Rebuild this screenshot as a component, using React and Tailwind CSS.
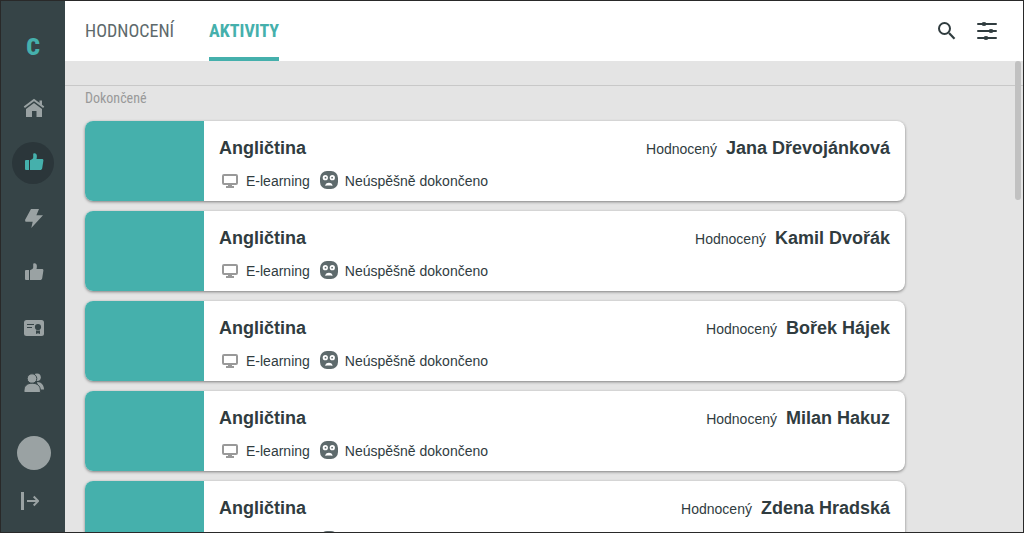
const people = ['Jana Dřevojánková', 'Kamil Dvořák', 'Bořek Hájek', 'Milan Hakuz', 'Zdena Hradská'];

const narrow = "font-['Roboto_Condensed','Liberation_Sans_Narrow',sans-serif]";

function HomeIcon() {
    return (
        <svg width="24" height="24" viewBox="0 0 24 24" fill="currentColor" aria-hidden="true">
            <path d="M3.3 11.3 13 4l9.7 7.3" fill="none" stroke="currentColor" strokeWidth="2" />
            <path d="M18.5 4.500H21v5l-2.500-2z" />
            <path d="m13 7 8 6v8h-5.500v-6h-4.500v6H5v-8z" />
        </svg>
    );
}

function ThumbIcon() {
    return (
        <svg width="24" height="24" viewBox="0 0 24 24" fill="currentColor" aria-hidden="true">
            <path d="M4 10a1 1 0 0 1 1-1h3v10H5a1 1 0 0 1-1-1z" />
            <path d="M9 9.3 11.4 8c.5-.3.8-.8.8-1.400V3c0-1.100 2.400-1.200 3.200.2.7 1.200.6 3 .1 4.800h5.500c.9 0 1.500.6 1.400 1.400l-1.200 7.800c-.2 1.100-1 1.800-2.100 1.800H9z" />
        </svg>
    );
}

function BoltIcon() {
    return (
        <svg width="24" height="24" viewBox="0 0 24 24" fill="currentColor" aria-hidden="true">
            <path d="M10 3h8l-2.600 6.300H22L10.300 22l1.400-6.300H4.500L4 14z" />
        </svg>
    );
}

function CertificateIcon() {
    return (
        <svg width="24" height="24" viewBox="0 0 24 24" aria-hidden="true">
            <rect x="3" y="4" width="20" height="16" rx="2.5" fill="currentColor" />
            <path d="M6 8.5h7M6 11.5h5" stroke="#364447" strokeWidth="1.2" />
            <circle cx="17" cy="11" r="3.1" fill="#364447" />
            <path d="M15 14.6h4V18l-2-.8-2 .8z" fill="#364447" />
        </svg>
    );
}

function UsersIcon() {
    return (
        <svg width="24" height="24" viewBox="0 0 24 24" fill="currentColor" aria-hidden="true">
            <circle cx="16" cy="6.2" r="3.8" />
            <path d="M16 11c4.500 0 7 3.500 7 7.500h-5z" />
            <circle cx="11" cy="7.6" r="4.8" stroke="#364447" strokeWidth="1" />
            <path d="M3 21.500v-2c0-4.500 3-7.300 8.200-7.300s8.200 2.800 8.200 7.300v2z" stroke="#364447" strokeWidth="1" />
        </svg>
    );
}

function LogoutIcon() {
    return (
        <svg width="18" height="18" viewBox="0 0 18 18" fill="none" stroke="currentColor" aria-hidden="true">
            <path d="M1.5 0v18" strokeWidth="3" />
            <path d="M6 9h11.500M12.700 4.500 17.200 9l-4.500 4.500" strokeWidth="2" />
        </svg>
    );
}

function SearchIcon() {
    return (
        <svg width="20" height="20" viewBox="0 0 20 20" fill="none" stroke="currentColor" aria-hidden="true">
            <circle cx="7.5" cy="7.5" r="5.5" strokeWidth="2" />
            <path d="m12 12 5.500 5.700" strokeWidth="2.2" />
        </svg>
    );
}

function FilterIcon() {
    return (
        <svg width="20" height="20" viewBox="0 0 20 20" aria-hidden="true">
            <path d="M1 3h18M1 10h18M1 17h18" stroke="currentColor" strokeWidth="2" strokeLinecap="round" />
            <ellipse cx="7" cy="3" rx="2.5" ry="2" fill="currentColor" />
            <ellipse cx="14" cy="10" rx="2.5" ry="2" fill="currentColor" />
            <ellipse cx="9" cy="17" rx="2.5" ry="2" fill="currentColor" />
        </svg>
    );
}

function MonitorIcon() {
    return (
        <svg width="16" height="14" viewBox="0 0 16 14" aria-hidden="true">
            <rect x="1" y="1" width="14" height="9" rx="1" fill="none" stroke="#999" strokeWidth="2" />
            <path d="M6 11h4v1h2v2H4v-2h2z" fill="#999" />
        </svg>
    );
}

function SadFaceIcon() {
    return (
        <svg width="18" height="18" viewBox="0 0 18 18" aria-hidden="true">
            <rect width="18" height="18" rx="7" fill="#5e6a6c" />
            <circle cx="5.3" cy="6.7" r="2.6" fill="#fff" />
            <circle cx="12.3" cy="6.7" r="2.6" fill="#fff" />
            <circle cx="5.5" cy="6.7" r="0.9" fill="#5e6a6c" />
            <circle cx="12.1" cy="6.7" r="0.9" fill="#5e6a6c" />
            <path d="M5.300 15c0-2.200 1.500-3.200 3.600-3.200s3.600 1 3.600 3.200l-1.500-.6H6.800z" fill="#fff" />
        </svg>
    );
}

const navItems = [
    { label: 'Domů', icon: HomeIcon },
    { label: 'Hodnocení', icon: ThumbIcon, active: true },
    { label: 'Aktivity', icon: BoltIcon },
    { label: 'Zpětná vazba', icon: ThumbIcon },
    { label: 'Certifikáty', icon: CertificateIcon },
    { label: 'Lidé', icon: UsersIcon },
];

function Sidebar() {
    return (
        <aside className="w-16 shrink-0 bg-[#364447] text-[#9aa2a3] flex flex-col items-center pt-6">
            <a href="#" className={`h-[42px] flex items-center pt-[2px] text-2xl font-black text-[#45b0ac] ${narrow}`}>C</a>
            <nav className="mt-5 flex flex-col gap-[13px]">
                {navItems.map(({ label, icon: Icon, active }) => (
                    <a
                        key={label}
                        href="#"
                        aria-label={label}
                        className={`w-[42px] h-[42px] rounded-full flex items-center justify-center ${active ? 'bg-[#2b363a] text-[#45b0ac]' : ''}`}
                    >
                        <Icon />
                    </a>
                ))}
            </nav>
            <div className="mt-8 w-[34px] flex flex-col items-start gap-[22px] ml-[2px]">
                <button aria-label="Profil" className="w-[34px] h-[34px] rounded-full bg-[#9aa2a3]" />
                <button aria-label="Odhlásit" className="ml-1"><LogoutIcon /></button>
            </div>
        </aside>
    );
}

function ActivityCard({ name }) {
    return (
        <article className="h-20 shrink-0 flex rounded-lg overflow-hidden bg-white shadow-[0_1px_3px_rgba(0,0,0,0.45)]">
            <div className="w-[119px] shrink-0 bg-[#45b0ac]" />
            <div className="flex-1 px-[15px] pt-[15px]">
                <div className="flex items-baseline justify-between leading-6">
                    <h2 className="text-lg leading-6 font-bold">Angličtina</h2>
                    <p className="text-sm leading-6">
                        Hodnocený
                        <strong className="ml-[9px] text-lg leading-6">{name}</strong>
                    </p>
                </div>
                <div className="mt-[10px] pl-[3px] flex items-center text-sm">
                    <MonitorIcon />
                    <span className="ml-2">E-learning</span>
                    <span className="ml-[10px] pb-[2px]"><SadFaceIcon /></span>
                    <span className="ml-[7px]">Neúspěšně dokončeno</span>
                </div>
            </div>
        </article>
    );
}

export default function App() {
    return (
        <div className="h-screen flex overflow-hidden border border-[#292929] font-['Liberation_Sans',Arial,sans-serif] text-[#303c3f]">
            <Sidebar />
            <div className="flex-1 min-w-0 flex flex-col">
                <header className="h-[60px] shrink-0 bg-white flex justify-between pl-5 pr-[26px]">
                    <nav className={`flex gap-[35px] text-lg ${narrow}`}>
                        <a href="#" className="flex items-center border-b-4 border-transparent pt-1 text-[#5e6a6c]">HODNOCENÍ</a>
                        <a href="#" className="flex items-center border-b-4 border-[#45b0ac] pt-1 font-bold text-[#45b0ac]">AKTIVITY</a>
                    </nav>
                    <div className="flex items-center gap-5">
                        <button aria-label="Hledat"><SearchIcon /></button>
                        <button aria-label="Filtr"><FilterIcon /></button>
                    </div>
                </header>
                <main className="relative flex-1 min-h-0 overflow-hidden bg-[#e4e4e4] pt-6">
                    <div className="border-t border-[#c8c8c8] pl-5 pr-[26px]">
                        <h1 className={`h-[35px] pt-[2px] text-sm text-[#999] ${narrow}`}>Dokončené</h1>
                        <div className="max-w-[820px] flex flex-col gap-[10px]">
                            {people.map(name => <ActivityCard key={name} name={name} />)}
                        </div>
                    </div>
                    <div className="absolute top-0 right-[2px] w-[6px] h-[139px] rounded-full bg-[#c1c1c1]" />
                </main>
            </div>
        </div>
    );
}
